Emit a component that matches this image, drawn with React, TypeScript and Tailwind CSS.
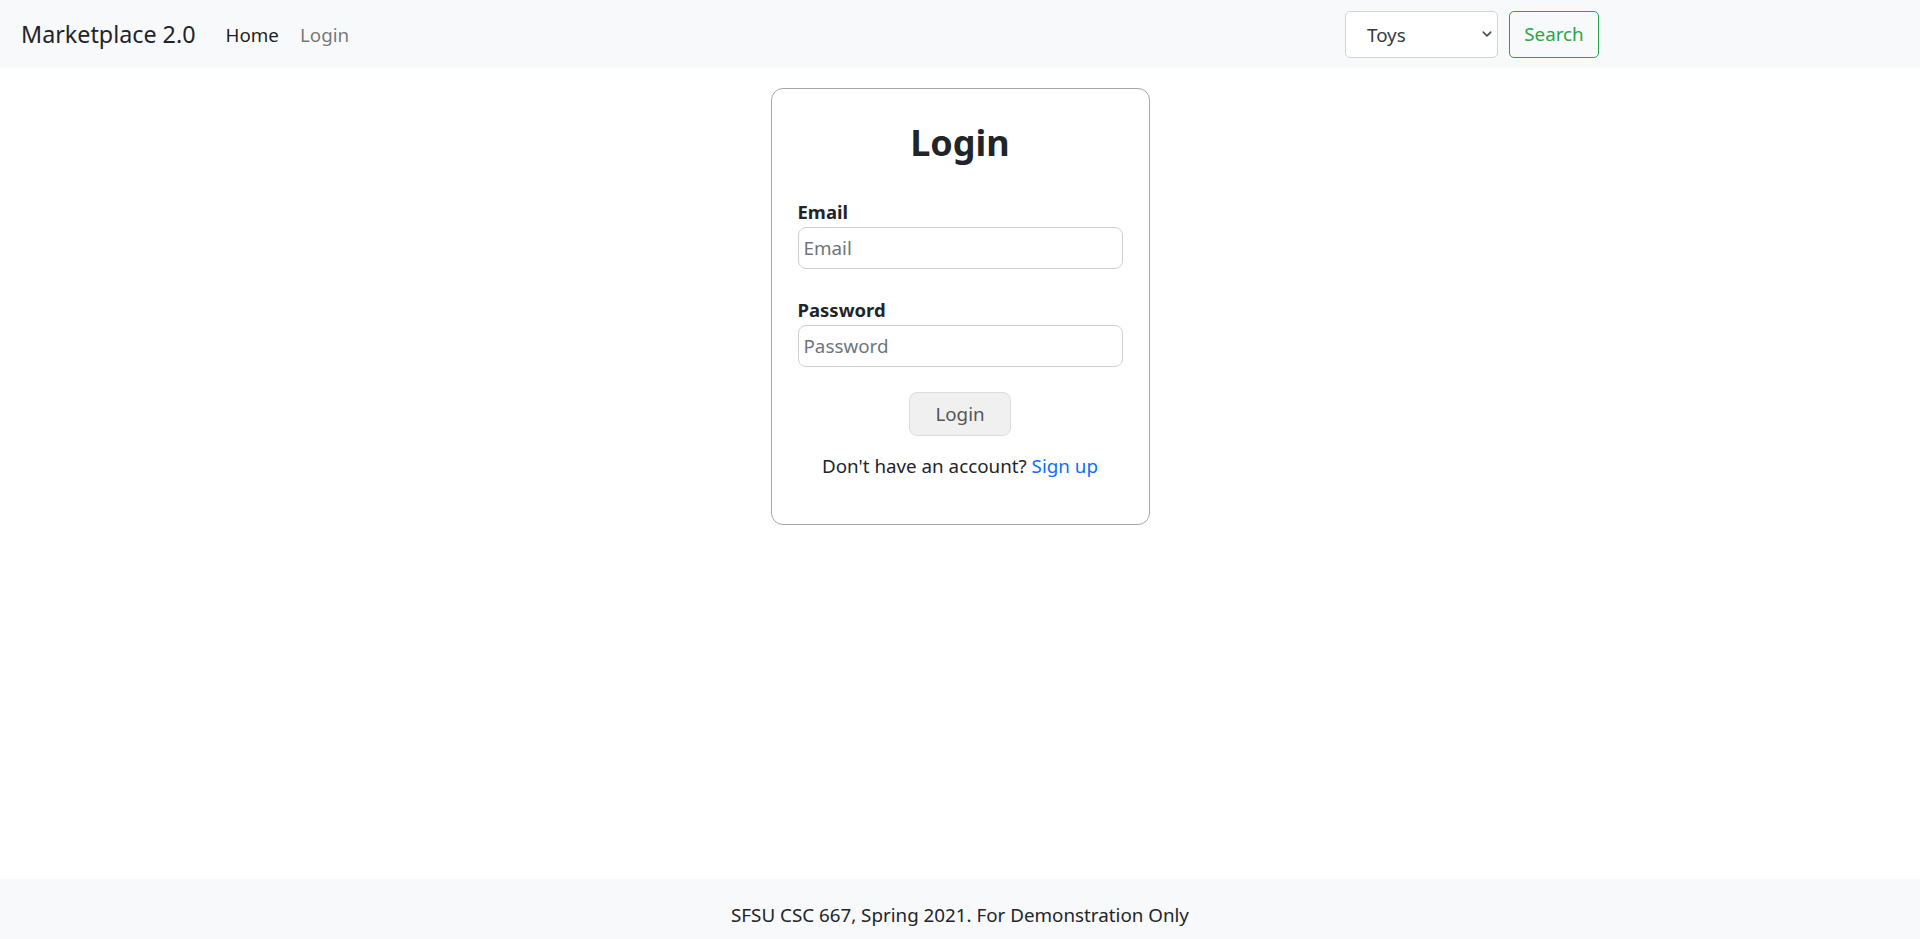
import React from "react";

export default function App() {
  return (
    <div
      className="min-h-screen flex flex-col bg-white text-[#212529]"
      style={{ fontFamily: '"Noto Sans", "Open Sans", sans-serif' }}
    >
      <nav className="h-[68px] bg-[#f8f9fa] flex items-center shrink-0 pt-[2px]">
        <a className="ml-[21px] text-[23.3px] leading-none text-[#212529] whitespace-nowrap">Marketplace 2.0</a>
        <div className="flex items-center ml-[30px] gap-[21px] text-[18.8px]">
          <a className="text-[rgba(0,0,0,0.9)]">Home</a>
          <a className="text-[rgba(0,0,0,0.55)]">Login</a>
        </div>
        <div className="flex items-center ml-auto mr-[321px] gap-[11px] -mt-[2px]">
          <div className="relative w-[153px] h-[47px] bg-white border border-[#ced4da] rounded-[5px] flex items-center pl-[21px] pt-[2px] text-[18.8px] text-[#343a40]">
            Toys
            <svg className="absolute right-[4px] top-1/2 -translate-y-1/2" width="12" height="12" viewBox="0 0 16 16">
              <path d="M3 5.5l5 5 5-5" fill="none" stroke="#4a4f55" strokeWidth="2.2" strokeLinecap="round" strokeLinejoin="round" />
            </svg>
          </div>
          <button className="h-[47px] w-[90px] border border-[#28a745] rounded-[5px] text-[#28a745] text-[18.8px] bg-transparent">
            Search
          </button>
        </div>
      </nav>

      <main className="flex-1 flex justify-center">
        <div className="mt-[20px] self-start w-[379px] border border-[#a6a6a6] rounded-[12px] px-[26px] pt-[30px] pb-[43px]">
          <h1 className="text-center text-[36px] font-bold leading-[48px] mb-[30px]">Login</h1>
          <label className="block text-[18.5px] font-bold leading-[30px]">Email</label>
          <div className="h-[42px] border border-[#cfcfcf] rounded-[8px] flex items-center px-[5px] text-[18.8px] text-[#6c757d]">Email</div>
          <label className="block mt-[26px] text-[18.5px] font-bold leading-[30px]">Password</label>
          <div className="h-[42px] border border-[#cfcfcf] rounded-[8px] flex items-center px-[5px] text-[18.8px] text-[#6c757d]">Password</div>
          <div className="flex justify-center mt-[25px]">
            <button className="w-[102px] h-[44px] bg-[#f0f0f0] border border-[#dddddd] rounded-[8px] text-[18.8px] text-[#555555]">Login</button>
          </div>
          <p className="text-center text-[18.8px] leading-[30px] mt-[15px]">
            Don't have an account? <a className="text-[#0d6efd]">Sign up</a>
          </p>
        </div>
      </main>

      <footer className="h-[60px] bg-[#f8f9fa] shrink-0 flex justify-center pt-[21px] text-[18.8px] leading-[30px]">
        SFSU CSC 667, Spring 2021. For Demonstration Only
      </footer>
    </div>
  );
}
